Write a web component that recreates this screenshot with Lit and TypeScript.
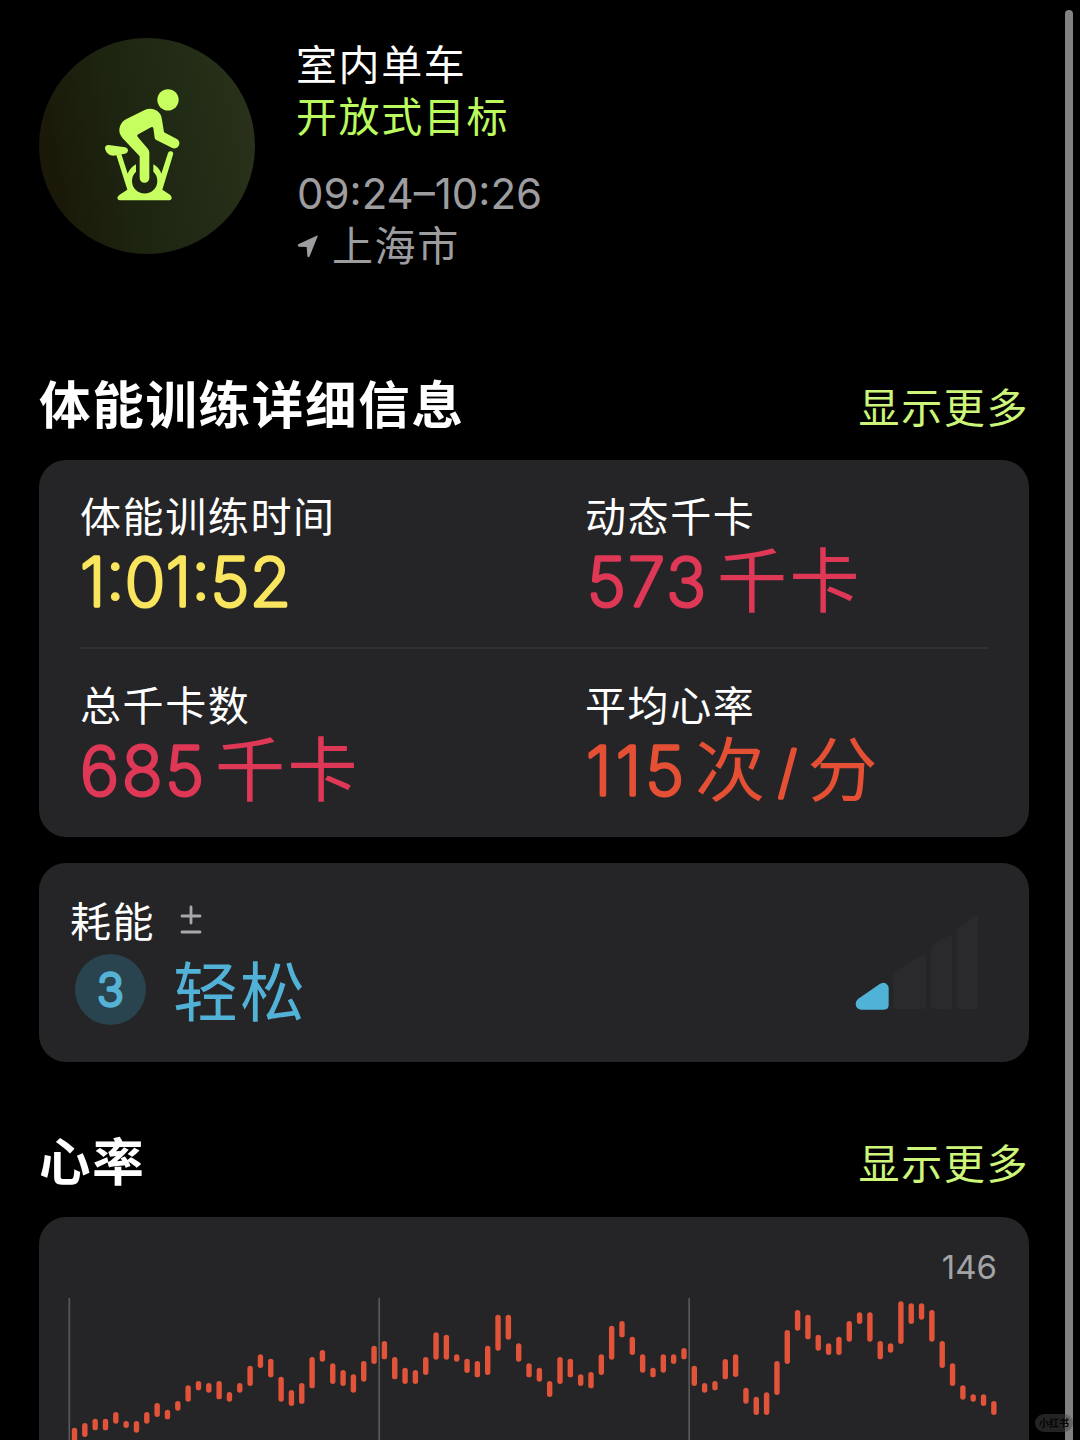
import { LitElement, html, svg, css } from "lit";
import { customElement, property } from "lit/decorators.js";

// Lowest and highest reading of each interval, as [top, bottom] in thirds of a pixel.
const RANGES: [number, number][] = [
  [473, 530], [459, 501], [446, 481], [446, 481], [426, 461], [453, 474], [453, 488], [426, 461], [399, 441], [419, 448],
  [393, 422], [346, 395], [333, 361], [339, 368], [333, 388], [366, 395], [339, 368], [287, 348], [253, 294], [266, 322],
  [320, 395], [360, 408], [339, 402], [261, 355], [240, 275], [280, 342], [300, 348], [313, 368], [273, 335], [227, 282],
  [213, 268], [261, 328], [293, 342], [300, 342], [261, 315], [187, 269], [194, 269], [253, 275], [266, 309], [273, 322],
  [227, 315], [134, 242], [134, 209], [220, 275], [280, 322], [293, 335], [333, 381], [261, 342], [266, 322], [313, 348],
  [306, 355], [253, 315], [167, 269], [153, 202], [200, 255], [253, 308], [293, 322], [253, 308], [253, 282], [234, 268],
  [287, 348], [339, 368], [333, 361], [267, 328], [253, 321], [353, 401], [380, 435], [367, 435], [273, 375], [180, 282],
  [120, 182], [134, 208], [194, 242], [220, 255], [200, 255], [153, 215], [127, 162], [127, 215], [213, 268], [220, 248],
  [94, 222], [100, 162], [100, 149], [120, 215], [213, 294], [280, 348], [346, 389], [373, 395], [373, 408], [393, 435],
];

const FIRST_BAR = 35.5;
const BAR_PITCH = 10.33;

@customElement("rounded-number")
class RoundedNumber extends LitElement {
  @property() value = "";
  @property({ type: Number }) width = 100;
  @property({ type: Number }) height = 72;
  @property({ type: Number }) baseline = 64.5;
  @property({ type: Number }) inset = 0;
  @property({ type: Number }) size = 67;

  static styles = css`
    :host { display: block; flex: none; }
    svg { display: block; overflow: visible; }
    text {
      font-family: Inter, "Noto Sans CJK SC", sans-serif;
      font-weight: 200;
      fill: currentColor;
      stroke: currentColor;
      stroke-width: 3.5px;
      stroke-linejoin: round;
      stroke-linecap: round;
    }
  `;

  render() {
    return html`<svg width=${this.width} height=${this.height}>
      <text x=${this.inset} y=${this.baseline} font-size=${this.size} textLength=${this.width - this.inset} lengthAdjust="spacing">${this.value}</text>
    </svg>`;
  }
}

@customElement("workout-metric")
class WorkoutMetric extends LitElement {
  @property() label = "";
  @property() value = "";
  @property() unit = "";
  @property({ type: Number }) width = 120;
  @property({ type: Number }) inset = 0;

  static styles = css`
    :host { display: block; font-family: Inter, "Noto Sans CJK SC", sans-serif; }
    .label { font-family: "Noto Sans CJK SC", sans-serif; font-size: 41px; line-height: 50px; letter-spacing: 1.6px; color: #fff; }
    .row { display: flex; height: 72px; gap: 11px; padding-top: 2px; }
    .unit { font-family: "Noto Sans CJK SC", sans-serif; font-size: 70px; line-height: 71px; letter-spacing: 2.6px; white-space: nowrap; display: flex; }
    .slash { width: 40px; display: flex; justify-content: center; }
  `;

  render() {
    return html`
      <div class="label">${this.label}</div>
      <div class="row">
        <rounded-number .value=${this.value} .width=${this.width} .inset=${this.inset}></rounded-number>
        ${this.unit === "次/分"
          ? html`<span class="unit"><span>次</span><span class="slash"><rounded-number value="/" .width=${20} .size=${56} .baseline=${62}></rounded-number></span><span>分</span></span>`
          : this.unit ? html`<span class="unit">${this.unit}</span>` : null}
      </div>
    `;
  }
}

@customElement("heart-chart")
class HeartChart extends LitElement {
  static styles = css`
    :host { display: block; }
    svg { display: block; }
    .grid { stroke: #58585a; stroke-width: 1.7; }
    .bar { fill: #e15439; }
  `;

  render() {
    return html`<svg width="990" height="170" viewBox="0 0 990 170">
      ${[30.3, 340.2, 650.2].map((x) => svg`<line class="grid" x1=${x} x2=${x} y1="28" y2="170"></line>`)}
      ${RANGES.map(([top, bottom], i) => svg`<rect class="bar" x=${FIRST_BAR + i * BAR_PITCH - 2.7} y=${top / 3}
        width="5.4" height=${(bottom - top) / 3} rx="2.7"></rect>`)}
    </svg>`;
  }
}

@customElement("app-root")
class AppRoot extends LitElement {
  static styles = css`
    :host {
      display: block; position: relative; width: 1080px; height: 1440px; overflow: hidden;
      background: #000; color: #fff; box-sizing: border-box; padding: 38px 51px 0 39px;
      font-family: Inter, "Noto Sans CJK SC", sans-serif;
    }
    .cjk { font-family: "Noto Sans CJK SC", sans-serif; font-size: 41px; letter-spacing: 1.6px; line-height: 52px; }
    .hero { display: flex; gap: 41px; height: 321px; }
    .info { margin-top: -2px; }
    .badge { width: 216px; height: 216px; flex: none; }
    .lime { color: #bbfa5f; }
    .grey { color: #9d9da0; }
    .time { font-size: 42px; line-height: 52px; margin: 28px 0 -3px 1px; }
    .place { display: flex; align-items: center; gap: 13px; padding-left: 1px; }
    .arrow { width: 22px; height: 24px; margin-top: 8px; }
    .head { display: flex; justify-content: space-between; height: 101px; box-sizing: border-box; padding-top: 13px; }
    h2 { margin: 0; font-family: "Noto Sans CJK SC", sans-serif; font-size: 51.5px; line-height: 60px; letter-spacing: 1.7px; font-weight: 700; }
    .more { color: #cdf579; padding-top: 7px; }
    .card { background: #252527; border-radius: 27px; }
    .details { height: 377px; box-sizing: border-box; padding: 29px 40px 0 41px; display: grid; grid-template-columns: 505px 1fr; grid-template-rows: 158px 1fr; }
    .details .low { border-top: 2px solid #303032; padding-top: 29px; }
    .yellow { color: #f9e55e; }
    .pink { color: #df3756; }
    .orange { color: #e55035; }
    .effort { margin-top: 26px; height: 199px; box-sizing: border-box; padding: 30px 0 0 31px; display: flex; justify-content: space-between; }
    .line { display: flex; align-items: center; }
    .pm { width: 22px; height: 30px; margin: 2px 0 0 24.5px; }
    .level { display: flex; margin: 9px 0 0 5px; }
    .dot { width: 71px; height: 71px; border-radius: 50%; background: #29444f; color: #55b2d5; display: flex; justify-content: center; align-items: center; }
    .easy { margin-left: 27px; font-size: 65px; line-height: 69px; letter-spacing: 2px; color: #51b1d6; }
    .signal { width: 124px; height: 100px; margin: 20px 50px 0 0; }
    .heart-head { margin-top: 54px; }
    .heart-head .more { padding-top: 6px; }
    .chart { height: 260px; box-sizing: border-box; padding-top: 29px; }
    .max { text-align: right; color: #a3a3a5; padding-right: 32px; font-size: 33px; line-height: 42px; height: 24px; }
    .scroll { position: absolute; left: 1065px; top: 10px; width: 8px; height: 1440px; border-radius: 4px; background: #828282; }
    .mark { position: absolute; left: 1035px; top: 1414px; width: 38px; height: 18px; border-radius: 9px; background: rgba(70,70,70,.5);
      color: #050505; font: 700 10px/17px "Noto Sans CJK SC", sans-serif; text-align: center; }
  `;

  render() {
    return html`
      <header class="hero">
        <svg class="badge" viewBox="27 23 648 648">
          <defs><linearGradient id="g" x1="0" y1=".6" x2="1" y2=".4">
            <stop offset="0" stop-color="#1a1707"></stop><stop offset=".4" stop-color="#1d2511"></stop>
            <stop offset=".65" stop-color="#212a14"></stop><stop offset="1" stop-color="#29311b"></stop>
          </linearGradient></defs>
          <circle cx="351" cy="347" r="324" fill="url(#g)"></circle>
          <g fill="#c7ff60">
            <circle cx="414" cy="208.500" r="32"></circle>
            <path d="M344 239Q363 230 381 241Q394 250 396 268L402 306L439 325A14.500 14.500 0 0 1 427 353L379 329Q375 327 374 322L370 293Q368 289 363 291L325 312Q319 315 324 321L354 356Q358 361 358 368V443A14.500 14.500 0 0 1 329 443V378L278 324Q267 311 268 297Q270 277 288 267Z"></path>
            <path d="M236 344L285 351Q294 353 294 361Q293 368 285 370L250 376Q231 375 225 355Q224 345 236 344Z"></path>
            <path d="M259 374L274 371L293 430Q301 411 318 402V424A38 38 0 1 0 370 424V402Q387 411 394 430L414 368A7.700 7.700 0 0 1 429 373L397 478L420 493Q426 498 425 504Q424 510 418 510H269Q262 509 262 502Q263 497 269 493L292 478Z"></path>
          </g>
        </svg>
        <div class="info">
          <div class="cjk">室内单车</div>
          <div class="cjk lime">开放式目标</div>
          <div class="time grey">09:24–10:26</div>
          <div class="place grey">
            <svg class="arrow" viewBox="51 616 66 72"><path fill="currentColor" d="M113 620Q114 617 110 618L56 643Q50 648 57 651L80 652L82 679Q84 686 89 680Z"></path></svg>
            <span class="cjk">上海市</span>
          </div>
        </div>
      </header>

      <div class="head"><h2>体能训练详细信息</h2><span class="cjk more">显示更多</span></div>
      <section class="card details">
        <workout-metric class="yellow" label="体能训练时间" value="1:01:52" .width=${211}></workout-metric>
        <workout-metric class="pink" label="动态千卡" value="573" unit="千卡" .width=${121} .inset=${2}></workout-metric>
        <workout-metric class="pink low" label="总千卡数" value="685" unit="千卡" .width=${124}></workout-metric>
        <workout-metric class="orange low" label="平均心率" value="115" unit="次/分" .width=${99} .inset=${1}></workout-metric>
      </section>

      <section class="card effort">
        <div>
          <div class="line"><span class="cjk">耗能</span>
            <svg class="pm" viewBox="0 0 22 30" stroke="#a9a9ab" stroke-width="2.800" stroke-linecap="round"><path d="M11 2V18M2 11H20M2 27H20"></path></svg>
          </div>
          <div class="level">
            <div class="dot"><rounded-number value="3" .width=${28} .height=${34} .baseline=${33} .size=${45}></rounded-number></div>
            <div class="cjk easy">轻松</div>
          </div>
        </div>
        <svg class="signal" viewBox="106 100 372 300">
          <path fill="#50b2d7" d="M115 358L179 314Q190 305 200 312Q207 317 207 326V376Q207 390 193 390H124Q109 389 108 374Q108 363 115 358Z"></path>
          <path fill="#2a2a2c" d="M221 279L300 228Q319 224 319 238V382Q319 388 313 388H227Q221 388 221 382ZM335 200L387 167Q397 164 397 173V382Q397 388 391 388H341Q335 388 335 382ZM411 148L465 109Q475 105 475 114V382Q475 388 469 388H417Q411 388 411 382Z"></path>
        </svg>
      </section>

      <div class="head heart-head"><h2>心率</h2><span class="cjk more">显示更多</span></div>
      <section class="card chart">
        <div class="max">146</div>
        <heart-chart></heart-chart>
      </section>
      <div class="scroll"></div>
      <div class="mark">小红书</div>
    `;
  }
}
